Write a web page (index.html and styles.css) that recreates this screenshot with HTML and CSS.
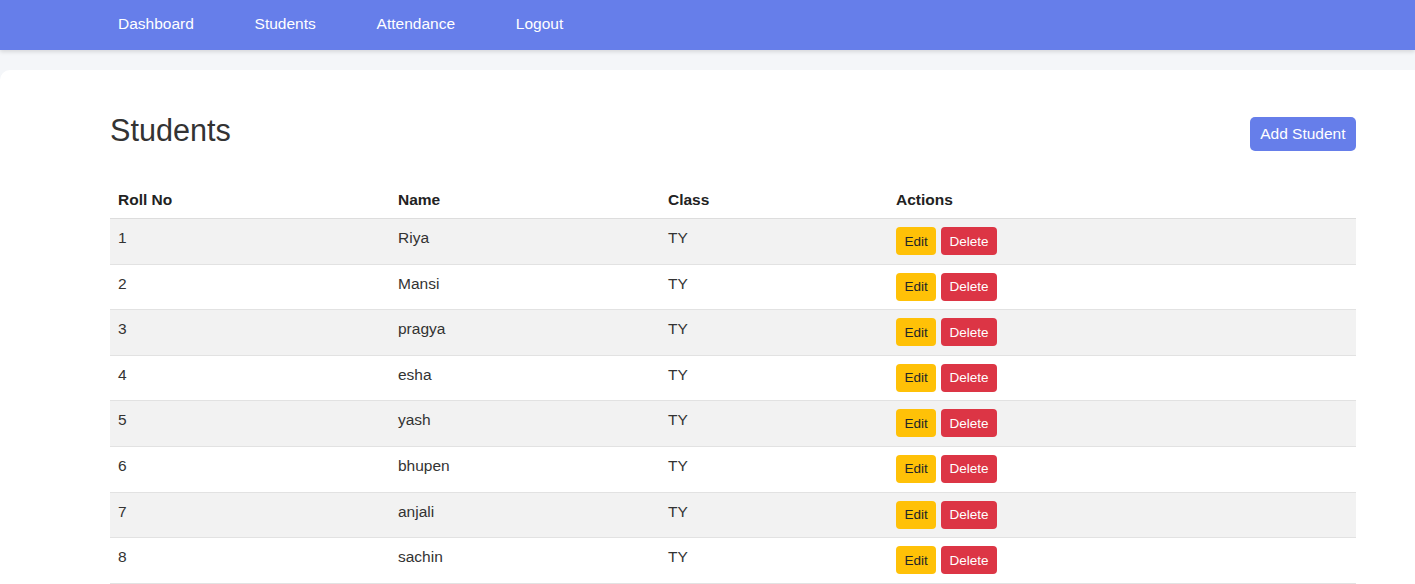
FILE: index.html
```html
<!DOCTYPE html>
<html lang="en">
<head>
<meta charset="utf-8">
<title>Students</title>
<link rel="stylesheet" href="styles.css">
</head>
<body>
<nav class="navbar">
  <a href="#" class="nav-link">Dashboard</a>
  <a href="#" class="nav-link">Students</a>
  <a href="#" class="nav-link">Attendance</a>
  <a href="#" class="nav-link">Logout</a>
</nav>
<main class="card">
  <div class="page-head">
    <h2 class="title">Students</h2>
    <button class="btn btn-add">Add Student</button>
  </div>
  <table class="table">
    <colgroup>
      <col class="c-roll"><col class="c-name"><col class="c-class"><col class="c-act">
    </colgroup>
    <thead>
      <tr><th>Roll No</th><th>Name</th><th>Class</th><th>Actions</th></tr>
    </thead>
    <tbody>
      <tr><td>1</td><td>Riya</td><td>TY</td><td class="actions"><button class="btn btn-edit">Edit</button><button class="btn btn-del">Delete</button></td></tr>
      <tr><td>2</td><td>Mansi</td><td>TY</td><td class="actions"><button class="btn btn-edit">Edit</button><button class="btn btn-del">Delete</button></td></tr>
      <tr><td>3</td><td>pragya</td><td>TY</td><td class="actions"><button class="btn btn-edit">Edit</button><button class="btn btn-del">Delete</button></td></tr>
      <tr><td>4</td><td>esha</td><td>TY</td><td class="actions"><button class="btn btn-edit">Edit</button><button class="btn btn-del">Delete</button></td></tr>
      <tr><td>5</td><td>yash</td><td>TY</td><td class="actions"><button class="btn btn-edit">Edit</button><button class="btn btn-del">Delete</button></td></tr>
      <tr><td>6</td><td>bhupen</td><td>TY</td><td class="actions"><button class="btn btn-edit">Edit</button><button class="btn btn-del">Delete</button></td></tr>
      <tr><td>7</td><td>anjali</td><td>TY</td><td class="actions"><button class="btn btn-edit">Edit</button><button class="btn btn-del">Delete</button></td></tr>
      <tr><td>8</td><td>sachin</td><td>TY</td><td class="actions"><button class="btn btn-edit">Edit</button><button class="btn btn-del">Delete</button></td></tr>
    </tbody>
  </table>
</main>
</body>
</html>
```
FILE: styles.css
```css
* { box-sizing: border-box; }
html, body { margin: 0; padding: 0; }
body {
  font-family: "Liberation Sans", Arial, sans-serif;
  font-size: 15.5px;
  color: #333;
  background: #f4f6f9;
  overflow: hidden;
}
.navbar {
  height: 50px;
  background: #667eea;
  display: flex;
  align-items: center;
  padding: 0 0 2px 88px;
  box-shadow: 0 2px 4px rgba(0,0,0,0.12);
  position: relative;
}
.nav-link {
  color: #fff;
  text-decoration: none;
  padding: 0 30.4px;
  font-size: 15.5px;
}
.nav-link:first-child { padding-left: 30px; }
.card {
  margin-top: 20px;
  background: #fff;
  border-radius: 10px 0 0 0;
  padding: 44px 59px 40px 110px;
  min-height: 600px;
}
.page-head {
  display: flex;
  justify-content: space-between;
  align-items: flex-start;
}
.title {
  margin: 0;
  font-size: 30.6px;
  font-weight: normal;
  line-height: 32px;
  color: #333;
}
.btn {
  font-family: "Liberation Sans", Arial, sans-serif;
  border: none;
  cursor: pointer;
}
.btn-add {
  margin-top: 3px;
  background: #667eea;
  color: #fff;
  font-size: 15.5px;
  height: 34px;
  padding: 0 10.5px;
  border-radius: 5px;
}
.table {
  margin-top: 29px;
  width: 100%;
  border-collapse: collapse;
  table-layout: fixed;
}
.c-roll { width: 280px; }
.c-name { width: 270px; }
.c-class { width: 228px; }
.table th {
  text-align: left;
  font-weight: bold;
  color: #222;
  padding: 11px 8px 9px;
  line-height: 18px;
  border-bottom: 1px solid #ddd;
}
.table td {
  padding: 10px 8px 0;
  line-height: 18px;
  height: 45.6px;
  border-bottom: 1px solid #e2e2e2;
  color: #333;
  vertical-align: top;
}
.table td.actions { padding-top: 8px; }
.table tbody tr:nth-child(odd) td { background: #f2f2f2; }
.btn-edit, .btn-del {
  font-size: 13.5px;
  height: 28px;
  padding: 0 8.4px;
  border-radius: 4px;
  vertical-align: top;
}
.btn-edit {
  background: #ffc107;
  color: #212529;
  margin-right: 5px;
}
.btn-del {
  background: #dc3545;
  color: #fff;
}
```
